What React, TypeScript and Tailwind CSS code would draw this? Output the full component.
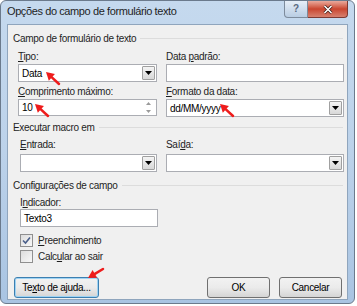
const font = { fontFamily: '"Liberation Sans", Arial, sans-serif' };

function Label({ children }: { children: React.ReactNode }) {
  return <div className="whitespace-nowrap text-[10px] leading-[13px] tracking-[-0.3px] text-[#1e1e1e]">{children}</div>;
}

function DropButton() {
  return (
    <div className="flex h-[14px] w-[13px] items-center justify-center rounded-[1px] border border-[#a0a0a0] bg-gradient-to-b from-[#f4f4f4] to-[#d8d8d8]">
      <svg width="7" height="4" viewBox="0 0 7 4">
        <path d="M0 0 H7 L3.5 4 Z" fill="#000" />
      </svg>
    </div>
  );
}

function Combo({ value, className }: { value?: string; className: string }) {
  return (
    <div className={`flex h-[18px] items-center justify-between border border-[#abadb3] bg-white pl-[3px] pr-[1px] ${className}`}>
      <span className="text-[10px] leading-[13px] tracking-[-0.3px] text-black">{value}</span>
      <DropButton />
    </div>
  );
}

function Spin({ value, className }: { value: string; className: string }) {
  return (
    <div className={`flex h-[17px] items-center justify-between border border-[#abadb3] bg-white pl-[3px] pr-[1px] ${className}`}>
      <span className="text-[10px] leading-[13px] tracking-[-0.3px] text-black">{value}</span>
      <div className="flex h-[13px] w-[13px] flex-col items-center justify-between py-[1px]">
        <svg width="5" height="3" viewBox="0 0 5 3">
          <path d="M0 3 H5 L2.5 0 Z" fill="#9a9a9a" />
        </svg>
        <svg width="5" height="3" viewBox="0 0 5 3">
          <path d="M0 0 H5 L2.5 3 Z" fill="#9a9a9a" />
        </svg>
      </div>
    </div>
  );
}

function Field({ value, className }: { value?: string; className: string }) {
  return (
    <div className={`flex h-[18px] items-center border border-[#abadb3] bg-white pl-[3px] ${className}`}>
      <span className="text-[10px] leading-[13px] tracking-[-0.3px] text-black">{value}</span>
    </div>
  );
}

function Heading({ children }: { children: React.ReactNode }) {
  return (
    <div className="flex items-center gap-[4px] pl-[5px] pr-[4px]">
      <span className="whitespace-nowrap text-[10px] leading-[13px] tracking-[-0.3px] text-[#1e1e1e]">{children}</span>
      <div className="h-px flex-1 bg-[#dcdcdc]" />
    </div>
  );
}

function Check({ checked, children }: { checked?: boolean; children: React.ReactNode }) {
  return (
    <div className="flex items-center gap-[5px]">
      <div className="flex h-[13px] w-[13px] items-center justify-center border border-[#8f8f8f] bg-gradient-to-br from-[#dcdcdc] to-[#f8f8f8]">
        {checked && (
          <svg width="9" height="9" viewBox="0 0 9 9">
            <path d="M1 4.5 L3.5 7 L8 1.5" stroke="#4a5f8a" strokeWidth="1.6" fill="none" />
          </svg>
        )}
      </div>
      <span className="whitespace-nowrap text-[10px] leading-[13px] tracking-[-0.3px] text-[#1e1e1e]">{children}</span>
    </div>
  );
}

function Button({ children, focused, className }: { children: React.ReactNode; focused?: boolean; className: string }) {
  return (
    <div
      className={`flex h-[21px] items-center justify-center rounded-[3px] border bg-gradient-to-b from-[#f2f2f2] via-[#ebebeb] to-[#d5d5d5] text-black ${
        focused ? "border-[#3c7fb1] shadow-[inset_0_0_0_1px_#9fd3f3]" : "border-[#707070]"
      } ${className}`}
    >
      <span className="whitespace-nowrap text-[10px] leading-[13px] tracking-[-0.3px]">{children}</span>
    </div>
  );
}

function arrowShape(tx: number, ty: number, sx: number, sy: number) {
  const dx = tx - sx;
  const dy = ty - sy;
  const len = Math.hypot(dx, dy);
  const ux = dx / len;
  const uy = dy / len;
  const hl = 8;
  const hw = 4.5;
  const bx = tx - ux * hl;
  const by = ty - uy * hl;
  const px = -uy;
  const py = ux;
  return {
    head: `${tx},${ty} ${bx + px * hw},${by + py * hw} ${bx - px * hw},${by - py * hw}`,
    shaft: { x1: sx, y1: sy, x2: bx, y2: by },
  };
}

const arrows = [
  arrowShape(46, 72, 59, 84),
  arrowShape(35, 104, 48, 116),
  arrowShape(220, 104, 233, 116),
  arrowShape(88, 278, 103, 269),
];

export default function App() {
  return (
    <div className="relative h-[306px] w-[357px] bg-white" style={font}>
      <div className="flex h-[304px] w-[355px] flex-col rounded-[6px] border border-[#6b7a8c] bg-gradient-to-b from-[#c5d9ee] via-[#bcd2ea] to-[#a9c4e2] px-[6px] pb-[3px]">
        <div className="flex h-[23px] items-start justify-between">
          <span className="whitespace-nowrap pt-[3px] text-[11px] leading-[15px] tracking-[-0.4px] text-[#1e1e1e]">
            Opções do campo de formulário texto
          </span>
          <div className="flex">
            <div className="flex h-[17px] w-[24px] items-center justify-center rounded-bl-[4px] border border-t-0 border-[#7d8b9c] bg-gradient-to-b from-[#e6eef7] to-[#b9cde3] text-[10px] font-bold leading-[10px] text-[#5a6a80]">
              ?
            </div>
            <div className="flex h-[17px] w-[40px] items-center justify-center rounded-br-[4px] border border-l-0 border-t-0 border-[#7d3a33] bg-gradient-to-b from-[#e9a99c] via-[#c9452f] to-[#d6806f]">
              <svg width="10" height="9" viewBox="0 0 10 9">
                <path d="M1.5 1 L8.5 8 M8.5 1 L1.5 8" stroke="#3b1a16" strokeWidth="3" />
                <path d="M1.5 1 L8.5 8 M8.5 1 L1.5 8" stroke="#ffffff" strokeWidth="1.6" />
              </svg>
            </div>
          </div>
        </div>
        <div className="flex flex-1 flex-col border border-[#8fa5bd] bg-[#f0f0f0] pt-[7px]">
          <Heading>Campo de formulário de texto</Heading>
          <div className="mt-[5px] flex gap-[9px] pl-[10px]">
            <div className="flex w-[139px] flex-col">
              <Label>
                <u>T</u>ipo:
              </Label>
              <Combo value="Data" className="mt-[1px]" />
              <div className="mt-[3px]">
                <Label>
                  <u>C</u>omprimento máximo:
                </Label>
              </div>
              <Spin value="10" className="mt-[1px]" />
            </div>
            <div className="flex w-[178px] flex-col">
              <Label>
                Data <u>p</u>adrão:
              </Label>
              <Field className="mt-[1px]" />
              <div className="mt-[3px]">
                <Label>
                  <u>F</u>ormato da data:
                </Label>
              </div>
              <Combo value="dd/MM/yyyy" className="mt-[1px] h-[17px]" />
            </div>
          </div>

          <div className="mt-[4px]">
            <Heading>Executar macro em</Heading>
          </div>
          <div className="mt-[4px] flex gap-[9px] pl-[12px]">
            <div className="flex w-[137px] flex-col">
              <Label>
                <u>E</u>ntrada:
              </Label>
              <Combo className="mt-[3px] h-[17px]" />
            </div>
            <div className="flex w-[178px] flex-col">
              <Label>
                Saí<u>d</u>a:
              </Label>
              <Combo className="mt-[3px] h-[17px]" />
            </div>
          </div>

          <div className="mt-[7px]">
            <Heading>Configurações de campo</Heading>
          </div>
          <div className="mt-[4px] flex flex-col pl-[12px]">
            <Label>
              I<u>n</u>dicador:
            </Label>
            <Field value="Texto3" className="mt-0 w-[138px]" />
            <div className="mt-[7px]">
              <Check checked>
                <u>P</u>reenchimento
              </Check>
            </div>
            <div className="mt-[3px]">
              <Check>
                Calc<u>u</u>lar ao sair
              </Check>
            </div>
          </div>

          <div className="mt-[14px] flex items-center pl-[6px] pr-[5px]">
            <Button focused className="w-[85px]">
              Te<u>x</u>to de ajuda...
            </Button>
            <div className="flex-1" />
            <Button className="w-[63px]">OK</Button>
            <Button className="ml-[9px] w-[63px]">Cancelar</Button>
          </div>
        </div>
      </div>

      <svg className="pointer-events-none absolute left-0 top-0" width="357" height="306">
        {arrows.map((a, i) => (
          <g key={i}>
            <line {...a.shaft} stroke="#ee1c1c" strokeWidth="2.5" strokeLinecap="round" />
            <polygon points={a.head} fill="#ee1c1c" />
          </g>
        ))}
      </svg>
    </div>
  );
}
